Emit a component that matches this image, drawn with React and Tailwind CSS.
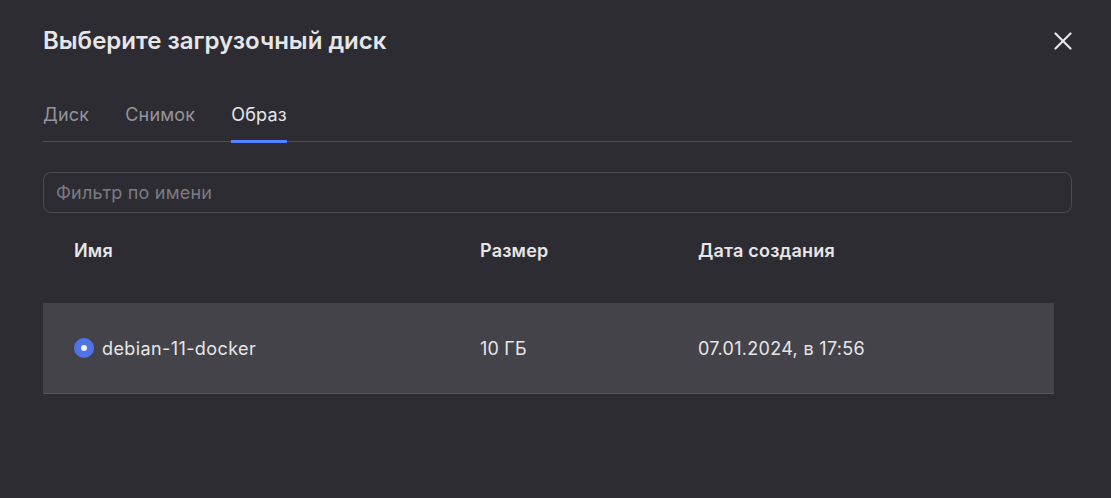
import React, { useState } from 'react';

const tabs = ['Диск', 'Снимок', 'Образ'];

export default function App() {
  const [tab, setTab] = useState('Образ');
  const [filter, setFilter] = useState('');

  return (
    <div
      className="w-[1111px] h-[498px] bg-[#2d2c32] text-[#e6e6e8] overflow-hidden"
      style={{ fontFamily: 'Inter, "Noto Sans", sans-serif' }}
    >
      <div className="pl-[43px] pr-[39px] pt-[26px]">
        <div className="flex items-center justify-between h-[30px]">
          <h2 className="text-[24px] font-semibold leading-[30px] tracking-[0px]">Выберите загрузочный диск</h2>
          <button className="w-[18px] h-[18px] flex items-center justify-center text-[#e6e6e8]">
            <svg width="18" height="18" viewBox="0 0 18 18" fill="none" stroke="currentColor" strokeWidth="2.2" strokeLinecap="round">
              <path d="M1.5 1.5L16.5 16.5M16.5 1.5L1.5 16.5" />
            </svg>
          </button>
        </div>

        <div className="mt-[47px] flex gap-9 border-b border-[#505056]">
          {tabs.map(t => (
            <button
              key={t}
              onClick={() => setTab(t)}
              className={
                'pb-[13px] text-[18px] leading-[24px] tracking-[0.2px] border-b-[3px] mb-[-2px] ' +
                (tab === t ? 'text-[#e6e6e8] border-[#5282ff]' : 'text-[#96959b] border-transparent')
              }
            >
              {t}
            </button>
          ))}
        </div>

        <input
          value={filter}
          onChange={e => setFilter(e.target.value)}
          placeholder="Фильтр по имени"
          className="mt-[30px] w-[1029px] h-[41px] rounded-lg border border-[#4c4b52] bg-transparent px-[12px] text-[18px] tracking-[0.2px] text-[#e6e6e8] placeholder:text-[#7c7b82] outline-none"
        />

        <div className="w-[1011px] mt-[24px]">
          <div className="flex text-[18px] font-semibold tracking-[0.2px] h-[26px] items-center">
            <div className="w-[406px] pl-[31px]">Имя</div>
            <div className="w-[218px] pl-[31px]">Размер</div>
            <div className="pl-[31px]">Дата создания</div>
          </div>

          <div className="mt-[40px] h-[91px] bg-[#444349] border-b border-[#56555b] flex items-center text-[18px]">
            <div className="w-[406px] pl-[31px] flex items-center gap-[8px]">
              <span className="w-[20px] h-[20px] rounded-full bg-[#4f74e8] flex items-center justify-center">
                <span className="w-[6px] h-[6px] rounded-full bg-[#f2f2f7]" />
              </span>
              <span className="tracking-[0.4px]">debian-11-docker</span>
            </div>
            <div className="w-[218px] pl-[31px] tracking-[0.2px]">10 ГБ</div>
            <div className="pl-[31px] tracking-[0.3px]">07.01.2024, в 17:56</div>
          </div>
        </div>
      </div>
    </div>
  );
}
